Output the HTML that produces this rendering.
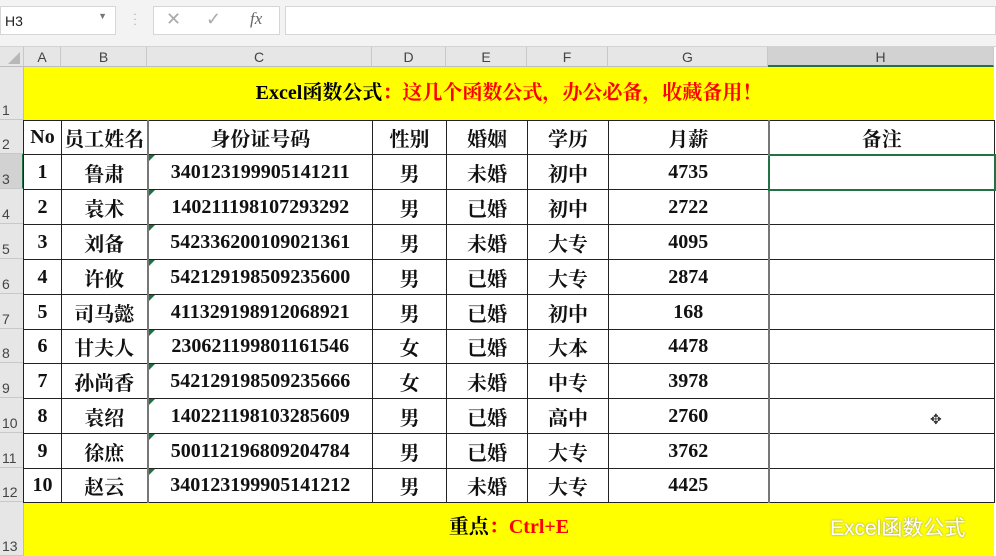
<!DOCTYPE html>
<html><head><meta charset="utf-8"><style>
*{margin:0;padding:0;box-sizing:border-box}
body{width:996px;height:556px;overflow:hidden;background:#fff;position:relative;font-family:"Liberation Serif","Noto Serif CJK SC",serif}
.a{position:absolute}
.tb{left:0;top:0;width:996px;height:47px;background:#f3f3f3;border-bottom:1px solid #d4d4d4}
.box{position:absolute;background:#fff;border:1px solid #d6d6d6}
.ch{top:47px;height:20px;background:#e6e6e6;border-right:1px solid #c8c8c8;border-bottom:1px solid #bdbdbd;font:14px "Liberation Sans",sans-serif;color:#444;text-align:center;line-height:20px}
.rh{left:0;width:24px;background:#e6e6e6;border-bottom:1px solid #c8c8c8;border-right:1px solid #bdbdbd;font:14px "Liberation Sans",sans-serif;color:#444;padding-left:2px;display:flex;align-items:flex-end;padding-bottom:1px}
.yl{background:#ffff00;left:24px;width:970px}
table{position:absolute;left:23px;top:120px;border-collapse:collapse}
td{border:1px solid #222;text-align:center;font-weight:bold;font-size:20px;color:#111;padding:0;position:relative}
td.c{border-left:2px solid #777}
.tri{position:absolute;left:0;top:0;width:0;height:0;border-top:6px solid #1e7145;border-right:6px solid transparent}
</style></head><body>
<div class="a tb"></div>
<div class="box" style="left:0;top:6px;width:116px;height:29px;font:14px 'Liberation Sans',sans-serif;padding:6px 4px;color:#222">H3<span style="position:absolute;right:8px;top:4px;font-size:9px;color:#777">▼</span></div>
<div class="a" style="left:133px;top:12px;color:#aaa;font-size:12px;line-height:5px">·<br>·<br>·</div>
<div class="box" style="left:153px;top:6px;width:127px;height:29px;color:#aaa;font:18px 'Liberation Sans',sans-serif"><span class="a" style="left:12px;top:2px">✕</span><span class="a" style="left:52px;top:2px">✓</span><span class="a" style="left:96px;top:2px;font:italic 17px 'Liberation Serif',serif;color:#666">fx</span></div>
<div class="box" style="left:285px;top:6px;width:711px;height:29px"></div>
<div class="a ch" style="left:0;width:24px;background:#e6e6e6"><svg width="16" height="16" style="position:absolute;left:6px;top:3px"><path d="M14 2 L14 14 L2 14Z" fill="#b8b8b8"/></svg></div>
<div class="a ch" style="left:24px;width:37px">A</div>
<div class="a ch" style="left:61px;width:86px">B</div>
<div class="a ch" style="left:147px;width:225px">C</div>
<div class="a ch" style="left:372px;width:74px">D</div>
<div class="a ch" style="left:446px;width:81px">E</div>
<div class="a ch" style="left:527px;width:81px">F</div>
<div class="a ch" style="left:608px;width:160px">G</div>
<div class="a ch" style="left:768px;width:226px;background:#d2d2d2;border-bottom:2px solid #217346">H</div>
<div class="a rh" style="top:67px;height:53px">1</div>
<div class="a rh" style="top:120px;height:34px">2</div>
<div class="a rh" style="top:154px;height:35px;background:#d2d2d2;border-right:2px solid #217346">3</div>
<div class="a rh" style="top:189px;height:35px">4</div>
<div class="a rh" style="top:224px;height:35px">5</div>
<div class="a rh" style="top:259px;height:35px">6</div>
<div class="a rh" style="top:294px;height:35px">7</div>
<div class="a rh" style="top:329px;height:34px">8</div>
<div class="a rh" style="top:363px;height:35px">9</div>
<div class="a rh" style="top:398px;height:35px">10</div>
<div class="a rh" style="top:433px;height:35px">11</div>
<div class="a rh" style="top:468px;height:34px">12</div>
<div class="a rh" style="top:502px;height:54px">13</div>
<div class="a yl" style="top:67px;height:53px;text-align:center;line-height:53px;font-weight:bold;font-size:20px">Excel函数公式<span style="color:#f00">：这几个函数公式，办公必备，收藏备用！</span></div>
<div class="a yl" style="top:502px;height:54px;border-top:1px solid #555;text-align:center;line-height:48px;font-weight:bold;font-size:20px">重点<span style="color:#f00">：Ctrl+E</span></div>
<div class="a" style="left:830px;top:512px;font:21px 'Liberation Sans','Noto Sans CJK SC',sans-serif;color:#fff;text-shadow:0 0 2px #888">Excel函数公式</div>
<table>
<colgroup><col style="width:38px"><col style="width:86px"><col style="width:225px"><col style="width:74px"><col style="width:81px"><col style="width:81px"><col style="width:160px"><col style="width:226px"></colgroup>
<tr style="height:34px"><td>No</td><td>员工姓名</td><td class="c">身份证号码</td><td>性别</td><td>婚姻</td><td>学历</td><td>月薪</td><td class="c">备注</td></tr>
<tr style="height:35px"><td>1</td><td>鲁肃</td><td class="c"><i class="tri"></i>340123199905141211</td><td>男</td><td>未婚</td><td>初中</td><td>4735</td><td class="c" style="border:2px solid #217346"></td></tr>
<tr style="height:35px"><td>2</td><td>袁术</td><td class="c"><i class="tri"></i>140211198107293292</td><td>男</td><td>已婚</td><td>初中</td><td>2722</td><td class="c"></td></tr>
<tr style="height:35px"><td>3</td><td>刘备</td><td class="c"><i class="tri"></i>542336200109021361</td><td>男</td><td>未婚</td><td>大专</td><td>4095</td><td class="c"></td></tr>
<tr style="height:35px"><td>4</td><td>许攸</td><td class="c"><i class="tri"></i>542129198509235600</td><td>男</td><td>已婚</td><td>大专</td><td>2874</td><td class="c"></td></tr>
<tr style="height:35px"><td>5</td><td>司马懿</td><td class="c"><i class="tri"></i>411329198912068921</td><td>男</td><td>已婚</td><td>初中</td><td>168</td><td class="c"></td></tr>
<tr style="height:34px"><td>6</td><td>甘夫人</td><td class="c"><i class="tri"></i>230621199801161546</td><td>女</td><td>已婚</td><td>大本</td><td>4478</td><td class="c"></td></tr>
<tr style="height:35px"><td>7</td><td>孙尚香</td><td class="c"><i class="tri"></i>542129198509235666</td><td>女</td><td>未婚</td><td>中专</td><td>3978</td><td class="c"></td></tr>
<tr style="height:35px"><td>8</td><td>袁绍</td><td class="c"><i class="tri"></i>140221198103285609</td><td>男</td><td>已婚</td><td>高中</td><td>2760</td><td class="c"></td></tr>
<tr style="height:35px"><td>9</td><td>徐庶</td><td class="c"><i class="tri"></i>500112196809204784</td><td>男</td><td>已婚</td><td>大专</td><td>3762</td><td class="c"></td></tr>
<tr style="height:34px"><td>10</td><td>赵云</td><td class="c"><i class="tri"></i>340123199905141212</td><td>男</td><td>未婚</td><td>大专</td><td>4425</td><td class="c"></td></tr>
</table>
<div class="a" style="left:930px;top:412px;font-size:14px;color:#333">✥</div>
</body></html>
